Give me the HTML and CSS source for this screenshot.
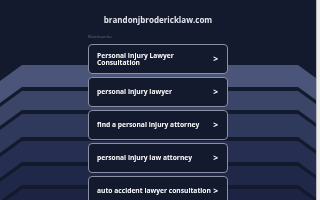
FILE: index.html
```html
<!DOCTYPE html>
<html lang="en">
<head>
  <meta charset="UTF-8" />
  <meta name="viewport" content="width=device-width, initial-scale=1.0" />
  <title>brandonjbrodericklaw.com</title>
  <link rel="stylesheet" href="styles.css">
</head>
<body>

  <svg class="backdrop" viewBox="0 0 320 200" preserveAspectRatio="none" aria-hidden="true">
    <polygon fill="#4b5579" points="0,81 22,65 298,65 320,81 320,103 298,87 22,87 0,103" />
    <polygon fill="#3b4568" points="0,107 22,91 298,91 320,107 320,126 298,110 22,110 0,126" />
    <polygon fill="#2f395b" points="0,130 22,114 298,114 320,130 320,153 298,137 22,137 0,153" />
    <polygon fill="#262f51" points="0,157 22,141 298,141 320,157 320,178 298,162 22,162 0,178" />
    <polygon fill="#202849" points="0,182 22,166 298,166 320,182 320,201 298,185 22,185 0,201" />
    <polygon fill="#1c2343" points="0,205 22,189 298,189 320,205 320,220 22,220 0,220" />
  </svg>

  <div class="page">
    <main class="content">
      <h1 class="domain">brandonjbrodericklaw.com</h1>

      <div class="searches">
        <div class="searches-label">Related searches</div>

        <a class="search-link" href="#">
          <span class="search-text">Personal Injury Lawyer Consultation</span>
          <span class="chevron">&gt;</span>
        </a>
        <a class="search-link" href="#">
          <span class="search-text">personal injury lawyer</span>
          <span class="chevron">&gt;</span>
        </a>
        <a class="search-link" href="#">
          <span class="search-text">find a personal injury attorney</span>
          <span class="chevron">&gt;</span>
        </a>
        <a class="search-link" href="#">
          <span class="search-text">personal injury law attorney</span>
          <span class="chevron">&gt;</span>
        </a>
        <a class="search-link" href="#">
          <span class="search-text">auto accident lawyer consultation</span>
          <span class="chevron">&gt;</span>
        </a>
      </div>
    </main>

    <div class="scrollbar"></div>
  </div>

</body>
</html>
```

FILE: styles.css
```css
html, body {
  height: 100%;
}
body {
  margin: 0;
  background: #131a2d;
  font-family: "Open Sans", "DejaVu Sans", sans-serif;
  color: #fff;
  overflow: hidden;
}
.backdrop {
  position: fixed;
  top: 0;
  left: 0;
  width: 320px;
  height: 200px;
  z-index: -1;
}
.page {
  display: flex;
  height: 200px;
}
.content {
  flex: 1;
  display: flex;
  flex-direction: column;
  align-items: center;
  padding-top: 15px;
}
.domain {
  margin: 0;
  font-size: 8px;
  line-height: 10px;
  font-weight: 700;
  color: #e4e6ee;
}
.searches {
  width: 140px;
  margin-top: 9px;
  display: flex;
  flex-direction: column;
  gap: 3px;
}
.searches-label {
  font-size: 3px;
  line-height: 6px;
  color: #6d7285;
  margin-bottom: 1px;
}
.search-link {
  display: flex;
  align-items: center;
  justify-content: space-between;
  height: 30px;
  box-sizing: border-box;
  padding: 0 9px 0 8px;
  background: #141a2e;
  border: 1px solid #8b90a2;
  border-radius: 4px;
  color: #fff;
  text-decoration: none;
  font-size: 6.7px;
  line-height: 7.5px;
  font-weight: 700;
  flex-shrink: 0;
}
.search-text {
  max-width: 120px;
}
.chevron {
  font-size: 8.5px;
  font-weight: 700;
}
.scrollbar {
  width: 3px;
  background: #ececec;
  border-left: 1px solid #b9b9bd;
}
```
